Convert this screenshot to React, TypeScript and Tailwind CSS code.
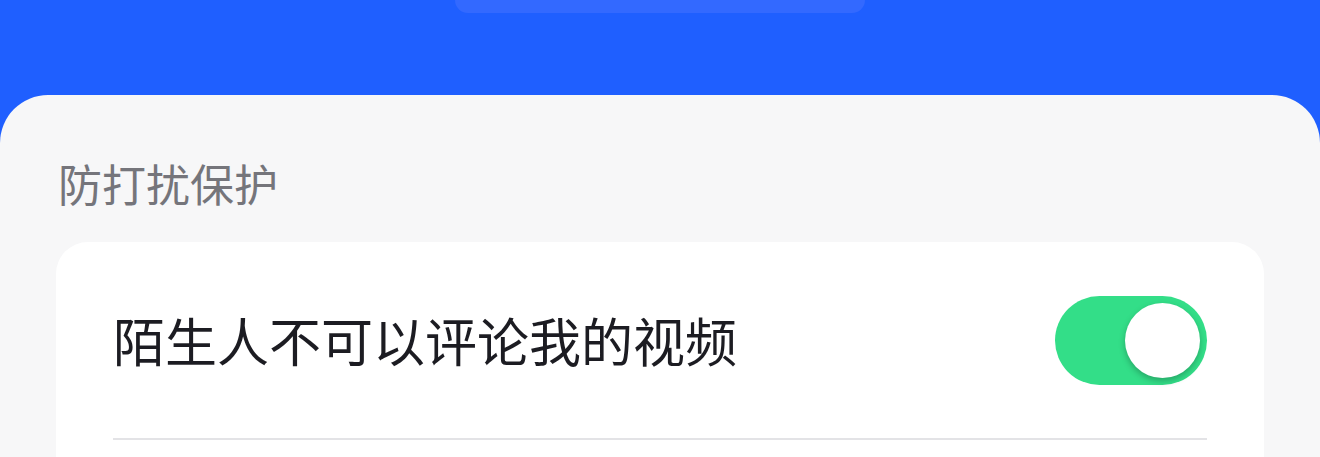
export default function App() {
  return (
    <div
      className="w-[1320px] h-[457px] overflow-hidden bg-[#1f5fff] flex flex-col"
      style={{ fontFamily: '"Noto Sans CJK SC", "Noto Sans", sans-serif' }}
    >
      {/* header strip */}
      <div className="h-[95px] shrink-0 flex justify-center">
        <div className="w-[410px] h-[13px] bg-[#3369ff] rounded-b-[26px]" />
      </div>

      {/* content panel */}
      <div className="flex-1 bg-[#f7f7f8] rounded-t-[48px] px-[56px] pt-[58px]">
        <div className="text-[44px] leading-[60px] text-[#75757b] pl-[2px]">防打扰保护</div>

        <div className="mt-[29px] bg-white rounded-[32px] px-[57px] pb-[40px]">
          <div className="flex items-center justify-between h-[198px] border-b-2 border-[#e3e3e6]">
            <span className="text-[52px] leading-none text-[#1c1c22]">陌生人不可以评论我的视频</span>
            <div className="w-[152px] h-[89px] rounded-full bg-[#33de88] flex items-center justify-end pr-[7px]">
              <div className="w-[75px] h-[75px] rounded-full bg-white shadow-[0_3px_6px_rgba(0,0,0,0.25)]" />
            </div>
          </div>
          <div className="h-[60px]" />
        </div>
      </div>
    </div>
  )
}
